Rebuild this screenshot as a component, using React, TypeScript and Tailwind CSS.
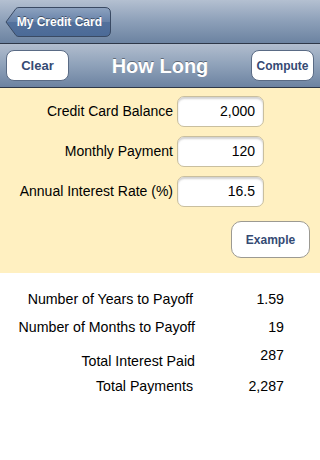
import React from "react";

const font = { fontFamily: '"Liberation Sans", Arial, sans-serif' };

function Field({ label, value }: { label: string; value: string }) {
  return (
    <div className="flex items-center h-[31px]">
      <div className="w-[174px] text-right pr-[4px] text-[14px] text-black whitespace-nowrap">{label}</div>
      <div className="w-[87px] h-[31px] rounded-[7px] bg-white border border-[#c9bf9f] shadow-[inset_0_2px_2px_rgba(0,0,0,0.18)] flex items-center justify-end pr-[8px] text-[14px] text-black">
        {value}
      </div>
    </div>
  );
}

export default function App() {
  return (
    <div className="w-[320px] h-[460px] bg-white overflow-hidden flex flex-col" style={font}>
      {/* top nav */}
      <div className="h-[44px] bg-gradient-to-b from-[#b4c0d1] via-[#8c9fb8] to-[#6c83a1] border-b border-[#2e3848] flex items-center pl-[5px] shrink-0">
        <div className="relative h-[30px] w-[106px] flex items-center justify-end pr-[9px]">
          <svg className="absolute inset-0" width="106" height="30" viewBox="0 0 106 30">
            <defs>
              <linearGradient id="bb" x1="0" y1="0" x2="0" y2="1">
                <stop offset="0" stopColor="#8ea3c0" />
                <stop offset="0.5" stopColor="#6681a8" />
                <stop offset="0.5" stopColor="#53719c" />
                <stop offset="1" stopColor="#4b6a97" />
              </linearGradient>
            </defs>
            <path d="M1 15 L11 1.5 Q12 0.5 14 0.5 L100 0.5 Q105.5 0.5 105.5 6 L105.5 24 Q105.5 29.5 100 29.5 L14 29.5 Q12 29.5 11 28.5 Z" fill="url(#bb)" stroke="#3a4a63" strokeWidth="1" />
          </svg>
          <span className="relative whitespace-nowrap text-white font-bold text-[12px] [text-shadow:0_-1px_0_rgba(0,0,0,0.45)]">My Credit Card</span>
        </div>
      </div>
      {/* second bar */}
      <div className="h-[44px] bg-gradient-to-b from-[#b1bdce] via-[#8ea1b9] to-[#6d83a1] border-b border-[#2e3848] flex items-center justify-between px-[6px] shrink-0">
        <div className="w-[63px] h-[31px] rounded-[8px] bg-white border border-[#5a6b85] flex items-center justify-center text-[#354a74] font-bold text-[13px]">Clear</div>
        <div className="text-white font-bold text-[20px] [text-shadow:0_-1px_0_rgba(0,0,0,0.4)]">How Long</div>
        <div className="w-[63px] h-[31px] rounded-[8px] bg-white border border-[#5a6b85] flex items-center justify-center text-[#354a74] font-bold text-[12px]">Compute</div>
      </div>
      {/* input panel */}
      <div className="h-[185px] bg-[#fff0c1] shrink-0 flex flex-col pt-[8px]">
        <div className="flex flex-col gap-[9px] pl-[3px]">
          <Field label="Credit Card Balance" value="2,000" />
          <Field label="Monthly Payment" value="120" />
          <Field label="Annual Interest Rate (%)" value="16.5" />
        </div>
        <div className="flex justify-end pr-[10px] mt-[14px]">
          <div className="w-[79px] h-[37px] rounded-[10px] bg-white border border-[#9c9a92] flex items-center justify-center text-[#354a74] font-bold text-[12px]">Example</div>
        </div>
      </div>
      {/* results */}
      <div className="flex flex-col pt-[16px] text-[14.2px] text-black leading-[20px]">
        <div className="flex h-[20px]">
          <div className="w-[193px] text-right">Number of Years to Payoff</div>
          <div className="w-[91px] text-right">1.59</div>
        </div>
        <div className="flex h-[20px] mt-[8px]">
          <div className="w-[195px] text-right">Number of Months to Payoff</div>
          <div className="w-[89px] text-right">19</div>
        </div>
        <div className="flex h-[20px] mt-[14px]">
          <div className="w-[195px] text-right">Total Interest Paid</div>
          <div className="w-[89px] text-right -translate-y-[6px]">287</div>
        </div>
        <div className="flex h-[20px] mt-[5px]">
          <div className="w-[193px] text-right">Total Payments</div>
          <div className="w-[91px] text-right">2,287</div>
        </div>
      </div>
    </div>
  );
}
